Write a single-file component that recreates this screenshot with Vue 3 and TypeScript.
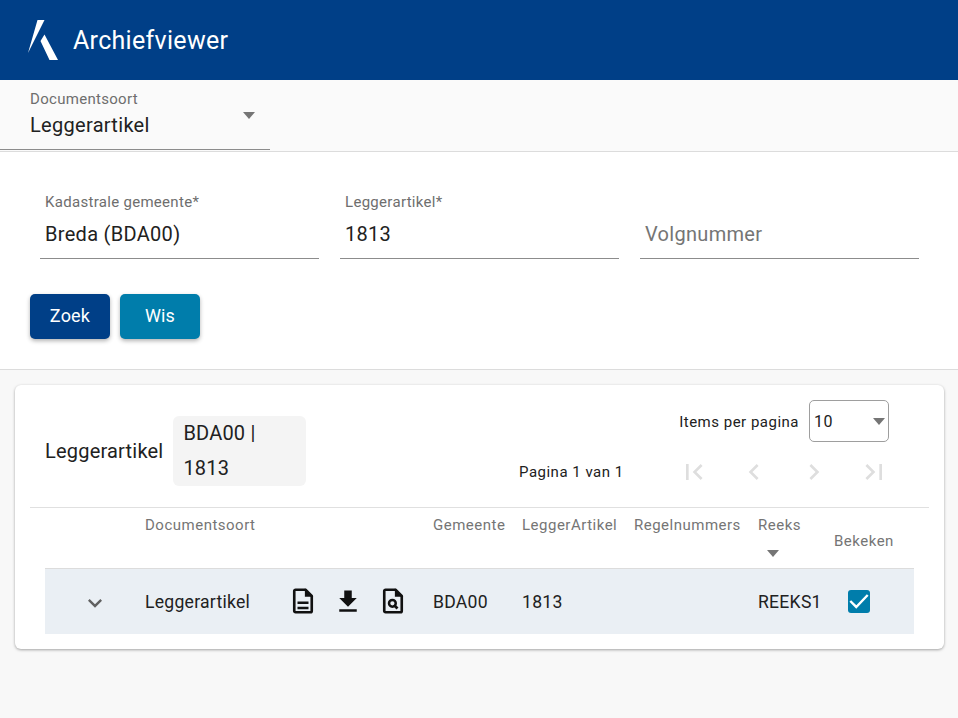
<template>
  <div class="page">
    <header class="topbar">
      <svg class="logo" viewBox="0 0 32 42" width="32" height="42">
        <path d="M10.5 1 H17.5 L1 34 Z M13.5 22 L17.5 15.5 L31 41 H22.5 Z" fill="#fff" />
      </svg>
      <span class="app-title">Archiefviewer</span>
    </header>

    <div class="type-bar">
      <div class="type-select">
        <label>Documentsoort</label>
        <div class="type-value">Leggerartikel</div>
        <span class="caret type-caret"></span>
      </div>
    </div>

    <section class="search">
      <div class="fields">
        <div v-for="f in fields" :key="f.label" class="field">
          <label v-if="f.value">{{ f.label }}</label>
          <div :class="['field-value', { placeholder: !f.value }]">{{ f.value || f.label }}</div>
        </div>
      </div>
      <div class="actions">
        <button class="btn btn-primary">Zoek</button>
        <button class="btn btn-secondary">Wis</button>
      </div>
    </section>

    <main class="content">
      <div class="card">
        <div class="card-head">
          <div class="result-title">
            <span>Leggerartikel</span>
            <span class="chip">BDA00 | 1813</span>
          </div>
          <div class="paging">
            <div class="per-page">
              <span class="per-label">Items per pagina</span>
              <div class="per-select">10<span class="caret"></span></div>
            </div>
            <div class="page-row">
              <span class="page-label">Pagina 1 van 1</span>
              <div class="page-btns">
                <svg v-for="d in pageIcons" :key="d" viewBox="0 0 24 24" width="32" height="32">
                  <path :d="d" fill="#dedede" />
                </svg>
              </div>
            </div>
          </div>
        </div>

        <table class="results">
          <thead>
            <tr>
              <th class="col-toggle"></th>
              <th class="col-type">Documentsoort</th>
              <th class="col-icons"></th>
              <th class="col-gem">Gemeente</th>
              <th class="col-art">LeggerArtikel</th>
              <th class="col-reg">Regelnummers</th>
              <th class="col-reeks">Reeks<span class="caret sort-caret"></span></th>
              <th class="col-seen">Bekeken</th>
            </tr>
          </thead>
          <tbody>
            <tr>
              <td>
                <svg class="chevron" viewBox="0 0 24 24" width="28" height="28">
                  <path d="M7.41 8.59 12 13.17l4.59-4.58L18 10l-6 6-6-6z" fill="#616161" />
                </svg>
              </td>
              <td><span class="cell">Leggerartikel</span></td>
              <td>
                <div class="row-icons">
                  <svg viewBox="0 0 24 24" width="30" height="30">
                    <path d="M14 3l5 5h-5z" fill="#111" stroke="#111" stroke-width="1" />
                    <path class="doc" d="M6 3h8l5 5v12a1 1 0 0 1-1 1H6a1 1 0 0 1-1-1V4a1 1 0 0 1 1-1z" />
                    <path d="M7.6 12.4h8.8v2H7.6zM7.6 16.6h8.8v2H7.6z" fill="#111" />
                  </svg>
                  <svg viewBox="0 0 24 24" width="30" height="30">
                    <path d="M19 9.5h-4v-6H9v6H5l7 7 7-7zM5 18.5v2h14v-2H5z" fill="#111" />
                  </svg>
                  <svg viewBox="0 0 24 24" width="30" height="30">
                    <path d="M14 3l5 5h-5z" fill="#111" stroke="#111" stroke-width="1" />
                    <path class="doc" d="M6 3h8l5 5v12a1 1 0 0 1-1 1H6a1 1 0 0 1-1-1V4a1 1 0 0 1 1-1z" />
                    <circle cx="11.5" cy="13.8" r="2.7" fill="none" stroke="#111" stroke-width="2" />
                    <path d="M13.4 15.8 15.6 18" stroke="#111" stroke-width="2.2" />
                  </svg>
                </div>
              </td>
              <td><span class="cell">BDA00</span></td>
              <td><span class="cell">1813</span></td>
              <td></td>
              <td><span class="cell">REEKS1</span></td>
              <td>
                <span class="check">
                  <svg viewBox="0 0 24 24" width="22" height="22">
                    <path d="M2.5 12 9 18.5 21.5 5.5" fill="none" stroke="#fff" stroke-width="2.6" />
                  </svg>
                </span>
              </td>
            </tr>
          </tbody>
        </table>
      </div>
    </main>
  </div>
</template>

<script setup lang="ts">
const fields = [
  { label: 'Kadastrale gemeente*', value: 'Breda (BDA00)' },
  { label: 'Leggerartikel*', value: '1813' },
  { label: 'Volgnummer', value: '' }
]

const pageIcons = [
  'M18.41 16.59 13.82 12l4.59-4.59L17 6l-6 6 6 6zM6 6h2v12H6z',
  'M15.41 7.41 14 6l-6 6 6 6 1.41-1.41L10.83 12z',
  'M10 6 8.59 7.41 13.17 12l-4.58 4.59L10 18l6-6z',
  'M5.59 7.41 10.18 12l-4.59 4.59L7 18l6-6-6-6zM16 6h2v12h-2z'
]
</script>

<style>
body {
  background: #f8f8f8;
}
</style>

<style scoped>
.page {
  width: 958px;
  min-height: 718px;
  background: #f8f8f8;
  font-family: Roboto, "Liberation Sans", sans-serif;
  color: #212121;
}
.topbar {
  height: 80px;
  background: #003f87;
  display: flex;
  align-items: center;
  padding-left: 27px;
  gap: 14px;
  box-sizing: border-box;
}
.logo {
  display: block;
}
.app-title {
  color: #fff;
  font-size: 25px;
  letter-spacing: 0.3px;
}
.type-bar {
  height: 72px;
  background: #fafafa;
  border-bottom: 1px solid #dcdcdc;
  box-sizing: border-box;
}
.type-select {
  position: relative;
  width: 270px;
  height: 70px;
  box-sizing: border-box;
  padding: 11px 0 0 30px;
  border-bottom: 1px solid #8c8c8c;
}
.type-select label {
  display: block;
  font-size: 15px;
  line-height: 16px;
  color: #6e6e6e;
  letter-spacing: 0.3px;
}
.type-value {
  font-size: 20px;
  line-height: 28px;
  margin-top: 4px;
  letter-spacing: 0.3px;
}
.caret {
  display: inline-block;
  width: 0;
  height: 0;
  border-left: 6.5px solid transparent;
  border-right: 6.5px solid transparent;
  border-top: 7px solid #757575;
}
.type-caret {
  position: absolute;
  right: 15px;
  top: 32px;
}
.search {
  background: #fff;
  height: 218px;
  box-sizing: border-box;
  border-bottom: 1px solid #dcdcdc;
  padding: 40px 39px 0 40px;
}
.fields {
  display: flex;
  gap: 21px;
}
.field {
  flex: 1;
  height: 67px;
  box-sizing: border-box;
  border-bottom: 1px solid #8c8c8c;
  padding-left: 5px;
  display: flex;
  flex-direction: column;
  justify-content: flex-end;
}
.field label {
  font-size: 15px;
  line-height: 20px;
  color: #6e6e6e;
  letter-spacing: 0.3px;
}
.field-value {
  font-size: 20px;
  line-height: 28px;
  margin-top: 8px;
  margin-bottom: 10px;
  letter-spacing: 0.3px;
}
.field-value.placeholder {
  color: #757575;
}
.actions {
  display: flex;
  gap: 10px;
  margin: 35px 0 0 -10px;
}
.btn {
  width: 80px;
  height: 45px;
  border: none;
  border-radius: 5px;
  color: #fff;
  font-family: inherit;
  font-size: 18px;
  font-weight: 400;
  letter-spacing: 0.2px;
  padding: 0 0 3px;
  box-shadow: 0 2px 4px rgba(0, 0, 0, 0.3);
}
.btn-primary {
  background: #003f87;
}
.btn-secondary {
  background: #007dab;
}
.content {
  padding: 15px 14px 0 15px;
}
.card {
  height: 264px;
  box-sizing: border-box;
  background: #fff;
  border-radius: 6px;
  box-shadow: 0 1px 3px rgba(0, 0, 0, 0.35);
  padding: 15px 15px 0;
}
.card-head {
  height: 108px;
  box-sizing: border-box;
  border-bottom: 1px solid #e0e0e0;
  display: flex;
  justify-content: space-between;
  padding-left: 15px;
}
.result-title {
  display: flex;
  align-items: center;
  gap: 10px;
  font-size: 20px;
  height: 102px;
  letter-spacing: 0.2px;
}
.chip {
  width: 133px;
  box-sizing: border-box;
  padding: 0 10px;
  background: #f4f4f4;
  border-radius: 6px;
  line-height: 35px;
  font-size: 20px;
  letter-spacing: 0.2px;
}
.paging {
  width: 410px;
  display: flex;
  flex-direction: column;
  align-items: flex-end;
}
.per-page {
  display: flex;
  align-items: center;
  gap: 10px;
  font-size: 15px;
  letter-spacing: 0.5px;
  margin-right: 40px;
}
.per-label {
  padding-top: 2px;
}
.per-select {
  width: 80px;
  height: 42px;
  box-sizing: border-box;
  border: 1px solid #9e9e9e;
  border-radius: 5px;
  padding-left: 4px;
  font-size: 16px;
  display: flex;
  align-items: center;
  justify-content: space-between;
}
.per-select .caret {
  margin-right: 3px;
}
.page-row {
  display: flex;
  align-items: center;
  margin-top: 8px;
  height: 44px;
  font-size: 15px;
  letter-spacing: 0.5px;
  width: 100%;
}
.page-btns {
  margin-left: 54px;
  display: flex;
  gap: 28px;
}
.page-btns svg {
  display: block;
}
.results {
  width: 869px;
  margin-left: 15px;
  border-collapse: collapse;
  table-layout: fixed;
}
.results th {
  height: 60px;
  box-sizing: border-box;
  border-bottom: 1px solid #dcdcdc;
  font-size: 15px;
  font-weight: 400;
  color: #757575;
  text-align: left;
  vertical-align: middle;
  padding: 6px 0 0;
  letter-spacing: 0.5px;
}
.results th:not(.col-seen) {
  vertical-align: top;
  padding-top: 8px;
}
.col-toggle { width: 100px; }
.col-type { width: 137px; }
.col-icons { width: 151px; }
.col-gem { width: 89px; }
.col-art { width: 112px; }
.col-reg { width: 124px; }
.col-reeks { width: 76px; }
.col-seen { width: 80px; }
.sort-caret {
  display: block;
  margin: 16px 0 0 9px;
}
.results td {
  height: 65px;
  padding: 0;
  background: #eaeff4;
  font-size: 17.6px;
  letter-spacing: 0.25px;
  vertical-align: middle;
}
.cell {
  display: block;
  padding-top: 2px;
}
.chevron {
  display: block;
  margin-left: 36px;
  margin-top: 4px;
}
.row-icons {
  display: flex;
  gap: 15px;
  margin-left: 6px;
  align-items: center;
}
.row-icons svg {
  display: block;
}
.doc {
  fill: none;
  stroke: #111;
  stroke-width: 2.1;
  stroke-linejoin: round;
}
.check {
  display: flex;
  align-items: center;
  justify-content: center;
  width: 22px;
  height: 23px;
  margin-left: 14px;
  background: #007dab;
  border-radius: 3px;
}
</style>
